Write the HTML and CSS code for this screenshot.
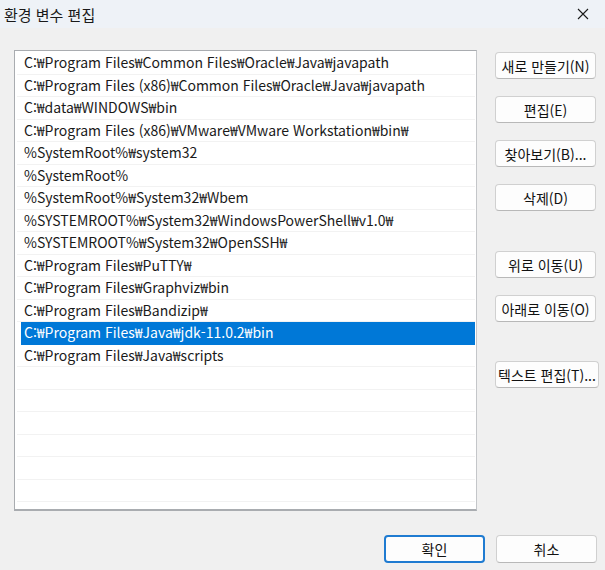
FILE: index.html
```html
<!DOCTYPE html>
<html lang="ko">
<head>
<meta charset="utf-8">
<link rel="stylesheet" href="styles.css">
</head>
<body>
<div class="window">
  <div class="titlebar">
    <span class="title">환경 변수 편집</span>
    <svg class="close" width="12" height="12" viewBox="0 0 12 12"><path d="M1 1L11 11M11 1L1 11" stroke="#1a1a1a" stroke-width="1.1" fill="none"/></svg>
  </div>
  <div class="content">
    <div class="main">
      <div class="list">
        <div class="row">C:₩Program Files₩Common Files₩Oracle₩Java₩javapath</div>
        <div class="row">C:₩Program Files (x86)₩Common Files₩Oracle₩Java₩javapath</div>
        <div class="row">C:₩data₩WINDOWS₩bin</div>
        <div class="row">C:₩Program Files (x86)₩VMware₩VMware Workstation₩bin₩</div>
        <div class="row">%SystemRoot%₩system32</div>
        <div class="row">%SystemRoot%</div>
        <div class="row">%SystemRoot%₩System32₩Wbem</div>
        <div class="row">%SYSTEMROOT%₩System32₩WindowsPowerShell₩v1.0₩</div>
        <div class="row">%SYSTEMROOT%₩System32₩OpenSSH₩</div>
        <div class="row">C:₩Program Files₩PuTTY₩</div>
        <div class="row">C:₩Program Files₩Graphviz₩bin</div>
        <div class="row">C:₩Program Files₩Bandizip₩</div>
        <div class="row selected">C:₩Program Files₩Java₩jdk-11.0.2₩bin</div>
        <div class="row">C:₩Program Files₩Java₩scripts</div>
        <div class="row"></div>
        <div class="row"></div>
        <div class="row"></div>
        <div class="row"></div>
        <div class="row"></div>
        <div class="row"></div>
      </div>
      <div class="side">
        <div class="group">
          <button class="btn">새로 만들기(N)</button>
          <button class="btn">편집(E)</button>
          <button class="btn">찾아보기(B)...</button>
          <button class="btn">삭제(D)</button>
        </div>
        <div class="group">
          <button class="btn">위로 이동(U)</button>
          <button class="btn">아래로 이동(O)</button>
        </div>
        <div class="group">
          <button class="btn wide">텍스트 편집(T)...</button>
        </div>
      </div>
    </div>
    <div class="footer">
      <button class="btn primary">확인</button>
      <button class="btn">취소</button>
    </div>
  </div>
</div>
</body>
</html>
```
FILE: styles.css
```css
* { box-sizing: border-box; }
html, body { margin: 0; padding: 0; }
body {
  width: 605px;
  height: 570px;
  background: #f0f0f0;
  font-family: "Noto Sans CJK KR", "Noto Sans", sans-serif;
  font-size: 14px;
  color: #1a1a1a;
  overflow: hidden;
}
.window { display: flex; flex-direction: column; height: 570px; }
.titlebar {
  height: 28px;
  background: #eef2f7;
  display: flex;
  align-items: center;
  justify-content: space-between;
  padding: 0 16px 0 4px;
}
.title { font-size: 15px; color: #1a1a1a; }
.close { display: block; }
.content { flex: 1; display: flex; flex-direction: column; padding: 22px 0 0 14px; }
.main { display: flex; }
.list {
  width: 463px;
  height: 461px;
  background: #fff;
  border: 1px solid #a9acb0;
  border-right-color: #c4c6c9;
  border-bottom: 2px solid #a9acb0;
  padding: 1px 1px 0 2px;
  overflow: hidden;
}
.row {
  height: 22.5px;
  line-height: 21px;
  padding-left: 7px;
  border-bottom: 1.5px solid #f2f2f2;
  white-space: nowrap;
}
.row.selected {
  background: #0078d7;
  color: #fff;
  border-bottom-color: #0078d7;
  margin-left: 4px;
  padding-left: 3px;
}
.side { display: flex; flex-direction: column; margin-left: 18px; padding-top: 2px; }
.group { display: flex; flex-direction: column; gap: 17px; margin-bottom: 40px; }
.group:nth-child(2) { margin-bottom: 39px; }
.btn {
  width: 101px;
  height: 27px;
  background: #fdfdfd;
  border: 1px solid #d0d0d0;
  border-bottom-color: #b8b8b8;
  border-radius: 4px;
  font-family: inherit;
  font-size: 14px;
  color: #111;
  padding: 0;
  white-space: nowrap;
  display: flex;
  align-items: center;
  justify-content: center;
}
.btn.wide { width: 104px; }
.footer { display: flex; justify-content: flex-end; gap: 11px; padding: 24px 8px 0 0; }
.footer .btn { height: 28px; }
.btn.primary { border: 2px solid #1f7bd1; }
```
